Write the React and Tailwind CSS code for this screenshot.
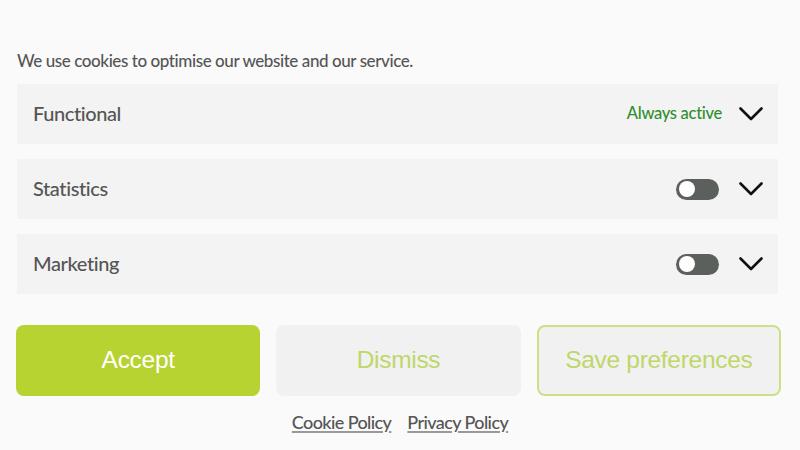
import React from "react";

function Chevron() {
  return (
    <svg width="24" height="14" viewBox="0 0 24 14" fill="none" className="block">
      <polyline points="1.5,1.5 12,12 22.5,1.5" stroke="#111" strokeWidth="2.6" strokeLinecap="round" strokeLinejoin="round" />
    </svg>
  );
}

function Toggle() {
  return (
    <div className="w-[43px] h-[21px] rounded-full bg-[#5b605d] flex items-center pl-[3px]">
      <div className="w-[16px] h-[16px] rounded-full bg-white" />
    </div>
  );
}

function Row({ label, right }) {
  return (
    <div className="h-[60px] bg-[#f3f3f3] ml-px mr-[6px] flex items-center justify-between pl-4 pr-[15px]">
      <span className="text-[20px] font-medium text-[#555] tracking-[-0.4px] -mt-[3px]">{label}</span>
      <div className="flex items-center gap-[17px]">
        {right}
        <Chevron />
      </div>
    </div>
  );
}

export default function App() {
  const lato = { fontFamily: "Lato, 'Open Sans', sans-serif" };
  return (
    <div className="w-[800px] h-[450px] bg-[#fafafa] px-4 pt-[50px] overflow-hidden" style={lato}>
      <p className="text-[17px] leading-[21px] font-medium text-[#555] tracking-[-0.42px] ml-px mb-[13px]">
        We use cookies to optimise our website and our service.
      </p>
      <div className="flex flex-col gap-[15px]">
        <Row
          label="Functional"
          right={<span className="text-[16.5px] font-medium text-[#2f8f2f] tracking-[-0.3px] -mt-[2px]">Always active</span>}
        />
        <Row label="Statistics" right={<div className="mr-[3px]"><Toggle /></div>} />
        <Row label="Marketing" right={<div className="mr-[3px]"><Toggle /></div>} />
      </div>
      <div
        className="grid grid-cols-3 gap-4 mt-[31px] mr-[3px]"
        style={{ fontFamily: "'Liberation Sans', Arial, sans-serif" }}
      >
        <button className="h-[71px] rounded-[8px] bg-[#b7d331] text-white text-[24.5px] tracking-[-0.3px]">
          Accept
        </button>
        <button className="h-[71px] rounded-[8px] bg-[#f1f1f1] text-[#bdd769] text-[24.5px] tracking-[-0.3px]">
          Dismiss
        </button>
        <button className="h-[71px] rounded-[8px] bg-[#f1f1f1] border-2 border-[#cbe187] text-[#bdd769] text-[24.5px] tracking-[-0.3px]">
          Save preferences
        </button>
      </div>
      <div className="flex justify-center gap-4 mt-[13px] text-[18px] font-medium text-[#555] tracking-[-0.6px]">
        <a className="underline decoration-[#999] decoration-2 underline-offset-[2px]">Cookie Policy</a>
        <a className="underline decoration-[#999] decoration-2 underline-offset-[2px]">Privacy Policy</a>
      </div>
    </div>
  );
}
